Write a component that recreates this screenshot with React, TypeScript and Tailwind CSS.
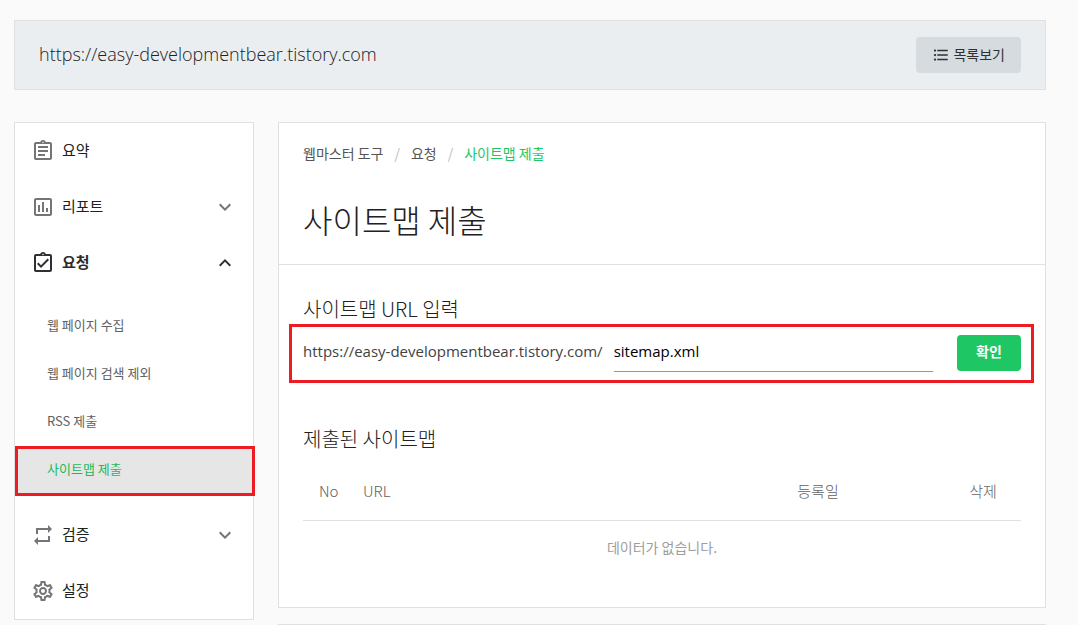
import React, { useState } from 'react';
import {
  MdExpandLess,
  MdExpandMore,
  MdFormatListBulleted,
  MdOutlineAssessment,
  MdOutlineAssignment,
  MdOutlineAssignmentTurnedIn,
  MdOutlineSettings,
  MdRepeat,
} from 'react-icons/md';
import type { IconType } from 'react-icons';

const SITE_URL = 'https://easy-developmentbear.tistory.com';

interface MenuItem {
  label: string;
  icon: IconType;
  expandable?: boolean;
  children?: string[];
}

const menu: MenuItem[] = [
  { label: '요약', icon: MdOutlineAssignment },
  { label: '리포트', icon: MdOutlineAssessment, expandable: true },
  {
    label: '요청',
    icon: MdOutlineAssignmentTurnedIn,
    expandable: true,
    children: ['웹 페이지 수집', '웹 페이지 검색 제외', 'RSS 제출', '사이트맵 제출'],
  },
  { label: '검증', icon: MdRepeat, expandable: true },
  { label: '설정', icon: MdOutlineSettings },
];

const Sidebar: React.FC = () => {
  const [openItem, setOpenItem] = useState('요청');
  const [selected, setSelected] = useState('사이트맵 제출');

  return (
    <nav className="w-60 shrink-0 self-start bg-white border border-[#e0e0e0]">
      {menu.map((item) => {
        const Icon = item.icon;
        const isOpen = item.expandable && openItem === item.label;
        return (
          <div key={item.label}>
            <button
              type="button"
              onClick={() => setOpenItem(isOpen ? '' : item.label)}
              className={`flex items-center w-full h-14 pl-4 pr-4 text-[15px] ${
                isOpen ? 'font-bold text-[#2b2b2b]' : 'text-[#212121]'
              }`}
            >
              <Icon className={`w-6 h-6 mr-[7px] ${isOpen ? 'text-[#303030]' : 'text-[#757575]'}`} />
              <span className="pb-0.5">{item.label}</span>
              {item.expandable &&
                (isOpen ? (
                  <MdExpandLess className="w-6 h-6 ml-auto text-[#303030]" />
                ) : (
                  <MdExpandMore className="w-6 h-6 ml-auto text-[#757575]" />
                ))}
            </button>

            {isOpen && item.children && (
              <ul className="py-3">
                {item.children.map((child) => {
                  const active = child === selected;
                  return (
                    <li key={child} className="relative">
                      <a
                        href="#"
                        onClick={() => setSelected(child)}
                        className={`flex items-center h-12 pl-8 pb-1 text-[13px] ${
                          active ? 'bg-[#e6e6e6] text-[#1fb85c]' : 'text-[#616161]'
                        }`}
                      >
                        {child}
                      </a>
                      {active && (
                        <span className="absolute left-0 -right-0.5 -inset-y-px border-3 border-[#ed1c24] pointer-events-none" />
                      )}
                    </li>
                  );
                })}
              </ul>
            )}
          </div>
        );
      })}
    </nav>
  );
};

const Breadcrumb: React.FC = () => (
  <ol className="flex items-center h-5 text-sm text-[#555555]">
    <li>
      <a href="#">웹마스터 도구</a>
    </li>
    <li className="px-[11px] text-[#bdbdbd]">/</li>
    <li>
      <a href="#">요청</a>
    </li>
    <li className="px-[11px] text-[#bdbdbd]">/</li>
    <li className="text-[#1ec664]">사이트맵 제출</li>
  </ol>
);

const App: React.FC = () => {
  const [path, setPath] = useState('sitemap.xml');

  return (
    <div className="h-screen overflow-hidden bg-[#fafafa] pt-5 pl-3.5 pr-8 font-['Noto_Sans_CJK_KR',sans-serif] text-[#212121]">
      {/* Site header */}
      <header className="flex items-center justify-between h-[70px] px-6 bg-[#ebeef1] border border-[#e0e0e0]">
        <p className="pb-0.5 text-lg font-light font-['Open_Sans','Noto_Sans_CJK_KR',sans-serif]">{SITE_URL}</p>
        <button
          type="button"
          className="flex items-center gap-[3px] h-9 px-4 rounded bg-[#d6dbdf] text-sm text-[#303030]"
        >
          <MdFormatListBulleted className="w-[18px] h-[18px]" />
          <span className="pb-0.5">목록보기</span>
        </button>
      </header>

      <div className="flex gap-6 mt-8">
        <Sidebar />

        <main className="flex-1 min-w-0">
          <section className="bg-white border border-[#e0e0e0]">
            <div className="px-6 pt-5 pb-[21px] border-b border-[#e0e0e0]">
              <Breadcrumb />
              <h1 className="mt-8 text-[32px] leading-12 font-light">사이트맵 제출</h1>
            </div>

            {/* Sitemap form */}
            <form className="px-6 pt-7" onSubmit={(e) => e.preventDefault()}>
              <h2 className="text-xl leading-8 font-light">
                <label htmlFor="sitemap">사이트맵 URL 입력</label>
              </h2>
              <div className="relative flex items-center mt-[9px] font-['Open_Sans','Noto_Sans_CJK_KR',sans-serif]">
                <span className="pb-1 text-[15px] text-[#424242]">{SITE_URL}/</span>
                <input
                  id="sitemap"
                  type="text"
                  value={path}
                  onChange={(e) => setPath(e.target.value)}
                  className="flex-1 min-w-0 h-[38px] ml-[11px] mr-6 pb-1 text-[15px] text-black border-b border-[#949494] outline-none"
                />
                <button type="submit" className="h-9 w-16 pb-0.5 rounded bg-[#1ec664] text-sm font-bold text-white">
                  확인
                </button>
                <span className="absolute -left-3.5 -right-[13px] -top-2.5 -bottom-[11px] border-3 border-[#ed1c24] pointer-events-none" />
              </div>
            </form>

            {/* Submitted sitemaps */}
            <div className="px-6 pt-[51px] pb-[33px]">
              <h2 className="text-xl leading-8 font-light">제출된 사이트맵</h2>
              <table className="w-full mt-[7px] table-fixed text-[15px]">
                <thead>
                  <tr className="h-[58px] border-b border-[#e0e0e0] text-[#616161]">
                    <th className="w-11 pl-4 text-left font-light">No</th>
                    <th className="px-4 text-left font-light">URL</th>
                    <th className="w-[254px] font-light">등록일</th>
                    <th className="w-[76px] font-light">삭제</th>
                  </tr>
                </thead>
                <tbody>
                  <tr className="h-[54px] text-sm text-[#9e9e9e]">
                    <td colSpan={4} className="text-center">
                      데이터가 없습니다.
                    </td>
                  </tr>
                </tbody>
              </table>
            </div>
          </section>

          <section className="mt-4 h-14 bg-white border border-[#e0e0e0]" />
        </main>
      </div>
    </div>
  );
};

export default App;
